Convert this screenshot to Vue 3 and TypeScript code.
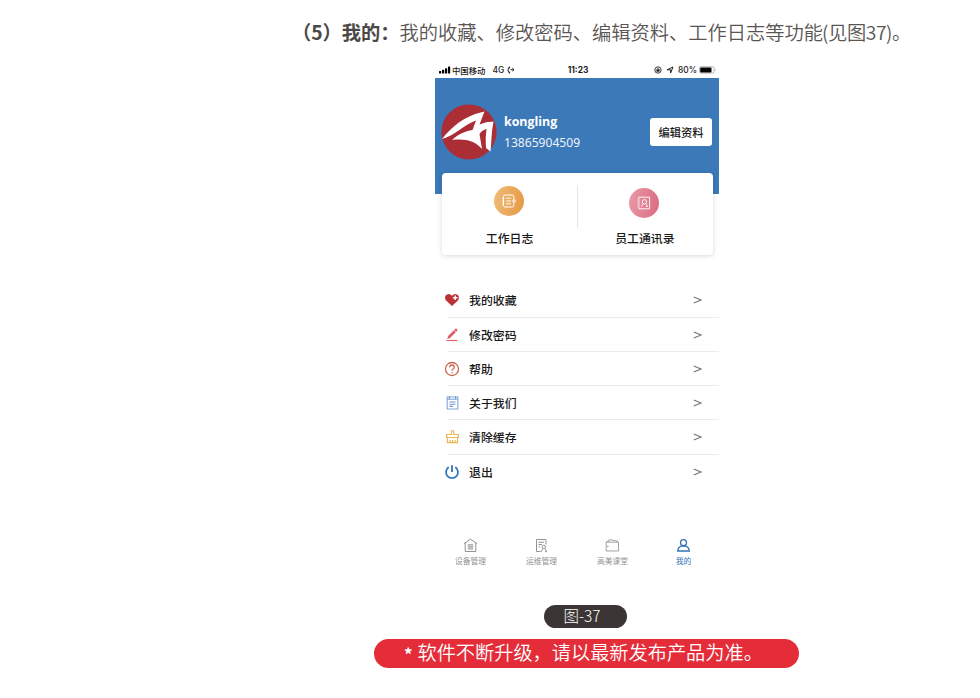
<script setup lang="ts">
interface MenuItem {
  id: string
  label: string
}

const menu: MenuItem[] = [
  { id: 'favorite', label: '我的收藏' },
  { id: 'password', label: '修改密码' },
  { id: 'help', label: '帮助' },
  { id: 'about', label: '关于我们' },
  { id: 'cache', label: '清除缓存' },
  { id: 'logout', label: '退出' },
]

const tabs: MenuItem[] = [
  { id: 'device', label: '设备管理' },
  { id: 'maintain', label: '运维管理' },
  { id: 'course', label: '高美课堂' },
  { id: 'mine', label: '我的' },
]
</script>

<template>
  <main class="page">
    <h1 class="heading"><strong>（5）我的：</strong><span>我的收藏、修改密码、编辑资料、工作日志等功能</span><span class="reference">(见图37)。</span></h1>

    <section class="phone">
      <div class="status">
        <div class="status-left">
          <svg class="signal" width="12" height="8" viewBox="0 0 12 8">
            <rect x="0" y="5" width="2.2" height="2.5" rx=".5" />
            <rect x="3" y="3.8" width="2.2" height="3.7" rx=".5" />
            <rect x="6" y="2.2" width="2.2" height="5.3" rx=".5" />
            <rect x="9" y=".6" width="2.2" height="6.9" rx=".5" />
          </svg>
          <span class="carrier">中国移动</span>
          <span class="network">4G</span>
          <svg width="8" height="8" viewBox="0 0 8 8" fill="none" stroke="#222" stroke-width="1">
            <path d="M3 .8Q1 1.2 1 4T3 7.2M2.6.8v1.6M2.6 5.6v1.6" />
            <path d="M3.5 3.7h3.3M5.4 2.2l1.6 1.5-1.6 1.5" />
          </svg>
        </div>
        <span class="time">11:23</span>
        <div class="status-right">
          <svg width="8" height="8" viewBox="0 0 8 8" fill="none" stroke="#222">
            <circle cx="4" cy="4" r="3.2" stroke-width=".9" />
            <rect x="2.4" y="3.5" width="3.2" height="2.2" fill="#222" stroke="none" />
            <path d="M3.1 3.8V3q.9-1.3 1.8 0v.8" stroke-width=".8" />
          </svg>
          <svg class="arrow" width="8" height="8" viewBox="0 0 8 8" fill="none" stroke="#222" stroke-width="1">
            <path d="M7 1 4.6 7V3.8H1Z" />
          </svg>
          <span class="percent">80%</span>
          <svg width="18" height="8" viewBox="0 0 18 8">
            <rect x=".5" y=".7" width="14.6" height="6.4" rx="1.5" fill="none" stroke="#999" stroke-width=".7" />
            <rect x="1.2" y="1.4" width="11.3" height="5" rx=".7" fill="#050505" />
            <path d="M16.1 2.7q1.2 1.2 0 2.5z" fill="#999" />
          </svg>
        </div>
      </div>

      <header class="profile">
        <svg class="avatar" width="56" height="56" viewBox="0 0 56 56">
          <circle cx="28" cy="28" r="27.6" fill="#ab2d35" />
          <path
            d="M1 35C10 24 22 12 43.500 7.500L38.500 20.500Q45 17.500 52.500 17.500C50.500 27 50.500 38 49.500 47.500L45 44Q44 34 45.500 25Q41 26 38.500 30L41 45C34 37 25 34.500 11 36C18 29.500 25 27 31.500 26L35 16.500C24 20 15 31 1 35Z"
            fill="#fff"
          />
        </svg>
        <div class="identity">
          <div class="name">kongling</div>
          <div class="number">13865904509</div>
        </div>
        <button class="edit">编辑资料</button>
      </header>

      <div class="card">
        <div class="shortcut">
          <span class="disc orange">
            <svg width="16" height="16" viewBox="0 0 16 16" fill="none" stroke="#fff" stroke-width="1">
              <path d="M12.800 6V3.500Q12.800 2 11.300 2H4Q2.500 2 2.500 3.500V12.500Q2.500 14 4 14H11.300Q12.800 14 12.800 12.500V10" />
              <path d="M5.200 5.200h5M5.200 8h5M5.200 10.800h5M1.200 5.200h2M1.200 8h2M1.200 10.800h2" />
              <circle cx="13" cy="8" r="1.300" />
            </svg>
          </span>
          <span>工作日志</span>
        </div>
        <div class="shortcut right">
          <span class="disc pink">
            <svg width="16" height="16" viewBox="0 0 16 16" fill="none" stroke="#fff" stroke-width=".9">
              <path d="M2.800 4V2.200H13.600V13.800H2.800V12M1.400 5h2.400M1.400 7h2.400M1.400 9h2.400M1.400 11h2.400" />
              <circle cx="8.500" cy="6.800" r="2.200" />
              <path d="M5.500 11.500Q6 9.300 7.500 8.700M9.500 8.700Q11 9.300 11.500 11.500H9.800" />
            </svg>
          </span>
          <span>员工通讯录</span>
        </div>
      </div>

      <ul class="menu">
        <li v-for="item in menu" :key="item.id">
          <svg class="menu-icon" width="16" height="16" viewBox="0 0 16 16" fill="none">
            <template v-if="item.id === 'favorite'">
              <path d="M8 14 2.100 8.500C.4 6.500.9 3.500 3 2.500Q5.800 1.200 8 3.800Q10.200 1.200 13 2.500C15.100 3.500 15.600 6.500 13.900 8.500Z" fill="#bd3036" />
              <path d="M11.200 3.500v4.600M8.900 5.800h4.600" stroke="#fff" stroke-width="1.400" />
            </template>
            <template v-else-if="item.id === 'password'">
              <path d="M3.200 12 4.100 8.900 11 2Q12 1.100 13 2T13 4L6.100 10.900Z" fill="#dc6068" />
              <path d="m9.700 2.800 2.700 2.700" stroke="#fff" stroke-width=".7" />
              <path d="M2.500 13.500H13.500" stroke="#e0666d" stroke-width="1.200" />
            </template>
            <template v-else-if="item.id === 'help'">
              <circle cx="8" cy="8" r="6.500" stroke="#cb6550" stroke-width="1.300" />
              <path d="M5.700 6.300Q5.800 4 8 4T10.300 6.200Q10.300 7.300 9 8Q8 8.500 8 9.800M8 11v1.300" stroke="#cb6550" stroke-width="1.300" />
            </template>
            <template v-else-if="item.id === 'about'">
              <path d="M3.200 2H13.800V14H3.200ZM3.200 4.300H13.800" stroke="#7fa5d8" stroke-width="1.100" />
              <path d="M5.500 1.300V4M11.500 1.300V4M5.500 7h6M5.500 9.200h6M5.500 11.400h3.500" stroke="#7098d2" stroke-width="1.100" />
            </template>
            <template v-else-if="item.id === 'cache'">
              <path d="M7.300 5.500V2.200Q8.500.8 9.700 2.200V5.500H14.300V8.500H2.700V5.500ZM3.500 8.500V13.700H13.500V8.500M6 13.500V11M8.500 13.500V11M11 13.500V11" stroke="#e9b657" stroke-width="1.200" />
            </template>
            <template v-else>
              <path d="M4.700 3.100A6 6 0 1 0 11.300 3.100M8 1.200V8" stroke="#3a7dbd" stroke-width="1.900" />
            </template>
          </svg>
          <span class="menu-label">{{ item.label }}</span>
          <svg class="chevron" width="9" height="8" viewBox="0 0 9 8">
            <path d="M.7.9 8 4 .7 7.100" fill="none" stroke="#777" stroke-width="1.100" />
          </svg>
        </li>
      </ul>

      <nav class="tabs">
        <div v-for="tab in tabs" :key="tab.id" class="tab" :class="{ active: tab.id === 'mine' }">
          <svg width="15" height="15" viewBox="0 0 15 15" fill="none" stroke="currentColor">
            <template v-if="tab.id === 'device'">
              <path d="M1 5.500 7.500 1.200 14 5.500M2.200 5V13.500H12.800V5" />
              <rect x="4.800" y="6.300" width="5.400" height="5.200" fill="currentColor" fill-opacity=".35" stroke="none" />
              <path d="M4.800 6.800h5.400M4.800 8.900h5.400M4.800 11h5.400" stroke-width=".8" />
            </template>
            <template v-else-if="tab.id === 'maintain'">
              <path d="M6.500 13.500H2.500V1.500H12V6.500M4.500 4.200H10M4.500 6.500H8M4.500 8.800H6" />
              <path d="M7.300 13.700Q7.700 11.300 9.200 10.500M10.400 10.500Q12 11.300 12.500 13.700H11" />
              <circle cx="9.800" cy="8.900" r="1.700" />
            </template>
            <template v-else-if="tab.id === 'course'">
              <path d="M3.500 4 4.200 1.700 12.300 3V4.200M1.200 4.200H13.500V13H1.200ZM1.200 4.200 3.500 2.500M2 8.400h1.600" stroke-width=".85" />
            </template>
            <template v-else>
              <circle cx="7.500" cy="4.700" r="3" stroke-width="1.300" />
              <path d="M1.700 13Q2.200 9 5.400 8.200H9.600Q12.800 9 13.300 13Z" stroke-width="1.300" />
            </template>
          </svg>
          <span>{{ tab.label }}</span>
        </div>
      </nav>
    </section>

    <div class="caption">图-37</div>
    <div class="notice"><b>*</b><span>软件不断升级，请以最新发布产品为准。</span></div>
  </main>
</template>

<style>
body {
  margin: 0;
  background: #fff;
}
</style>

<style scoped>
.page {
  box-sizing: border-box;
  width: 980px;
  height: 698px;
  overflow: hidden;
  font-family: "Noto Sans CJK SC", sans-serif;
  color: #181818;
}
.heading {
  height: 44px;
  margin: 0;
  padding: 18px 0 0 292px;
  font-size: 19.25px;
  line-height: 28px;
  font-weight: 350;
  color: #5a5553;
  white-space: nowrap;
}
.heading strong {
  font-weight: 700;
  color: #4c4846;
}
.reference {
  margin-left: -1px;
  letter-spacing: -0.4px;
}
.phone {
  width: 284px;
  height: 543px;
  margin-left: 435px;
}
.status {
  display: grid;
  grid-template-columns: 1fr auto 1fr;
  align-items: center;
  height: 15.5px;
  font-size: 8.4px;
  line-height: 16px;
}
.status-left,
.status-right {
  display: flex;
  align-items: center;
}
.status-left {
  padding-left: 4px;
}
.status-right {
  justify-content: flex-end;
  padding-right: 2px;
}
.carrier {
  margin-left: 1px;
  font-weight: 500;
}
.network {
  margin: 0 3px 0 7px;
  font-family: Inter, sans-serif;
  font-weight: 500;
}
.time {
  padding-left: 2px;
  font-family: Inter, sans-serif;
  font-weight: 700;
}
.arrow {
  margin: 0 4px;
}
.percent {
  margin-right: 2px;
  font-family: Inter, sans-serif;
  font-weight: 500;
}
.profile {
  display: flex;
  align-items: center;
  box-sizing: border-box;
  height: 116px;
  padding: 0 7px 8px 6px;
  background: #3c79b8;
}
.identity {
  flex: 1;
  padding-left: 7px;
  color: #fff;
  font-family: "Open Sans", sans-serif;
}
.name {
  font-size: 12.4px;
  line-height: 21px;
  font-weight: 700;
}
.number {
  font-family: "Noto Sans", sans-serif;
  font-size: 12.1px;
  line-height: 21px;
  color: #edf3f9;
}
.edit {
  width: 62px;
  height: 28px;
  padding: 0;
  border: 0;
  border-radius: 3px;
  background: #fff;
  color: #181818;
  font-family: inherit;
  font-size: 11.3px;
  font-weight: 500;
}
.card {
  position: relative;
  display: flex;
  box-sizing: border-box;
  height: 82px;
  margin: -20.5px 6.5px 0 7px;
  border-radius: 4px;
  background: #fff;
  box-shadow: 0 1px 5px rgba(0, 0, 0, 0.15);
}
.shortcut {
  display: flex;
  flex: 1;
  flex-direction: column;
  align-items: center;
  padding-top: 13px;
  font-size: 11.9px;
  line-height: 18px;
  font-weight: 500;
}
.shortcut.right {
  padding-top: 15px;
  background: linear-gradient(#e5e5e5, #e5e5e5) 0 12px / 1px 43px no-repeat;
}
.disc {
  display: flex;
  align-items: center;
  justify-content: center;
  width: 30px;
  height: 30px;
  margin: 0 1px 13px 0;
  border-radius: 50%;
}
.right .disc {
  margin-bottom: 11px;
}
.orange {
  background: linear-gradient(100deg, #edbd78, #e69843);
}
.pink {
  background: linear-gradient(100deg, #e99aa9, #db6b80);
}
.menu {
  margin: 28.3px 0 0;
  padding: 0;
  list-style: none;
}
.menu li {
  display: flex;
  align-items: center;
  box-sizing: border-box;
  height: 34.25px;
  padding: 0 17px 0 9px;
  background: linear-gradient(#ebebeb, #ebebeb) 13px 100% / 271px 1px no-repeat;
}
.menu li:last-child {
  background: none;
}
.menu-label {
  flex: 1;
  margin-left: 9px;
  font-size: 11.9px;
  line-height: 18px;
  font-weight: 500;
}
.tabs {
  display: grid;
  grid-template-columns: repeat(4, 1fr);
  margin-top: 49px;
}
.tab {
  display: flex;
  flex-direction: column;
  align-items: center;
  gap: 2px;
  color: #929292;
  font-size: 7.8px;
  line-height: 12px;
}
.tab.active {
  color: #3474b4;
}
.caption {
  width: 83px;
  height: 23px;
  margin-left: 544px;
  box-sizing: border-box;
  padding-right: 7px;
  border-radius: 12px;
  background: #3b3635;
  color: #fff;
  font-size: 15.5px;
  line-height: 21px;
  font-weight: 300;
  text-align: center;
}
.notice {
  display: flex;
  box-sizing: border-box;
  width: 425px;
  height: 29px;
  margin: 11px 0 0 374px;
  padding-left: 30px;
  border-radius: 15px;
  background: #e42d39;
  color: #fff;
  font-size: 19.2px;
  line-height: 26px;
  font-weight: 350;
  white-space: nowrap;
}
.notice b {
  width: 13.5px;
  padding-top: 2px;
  font-size: 17px;
}
</style>
